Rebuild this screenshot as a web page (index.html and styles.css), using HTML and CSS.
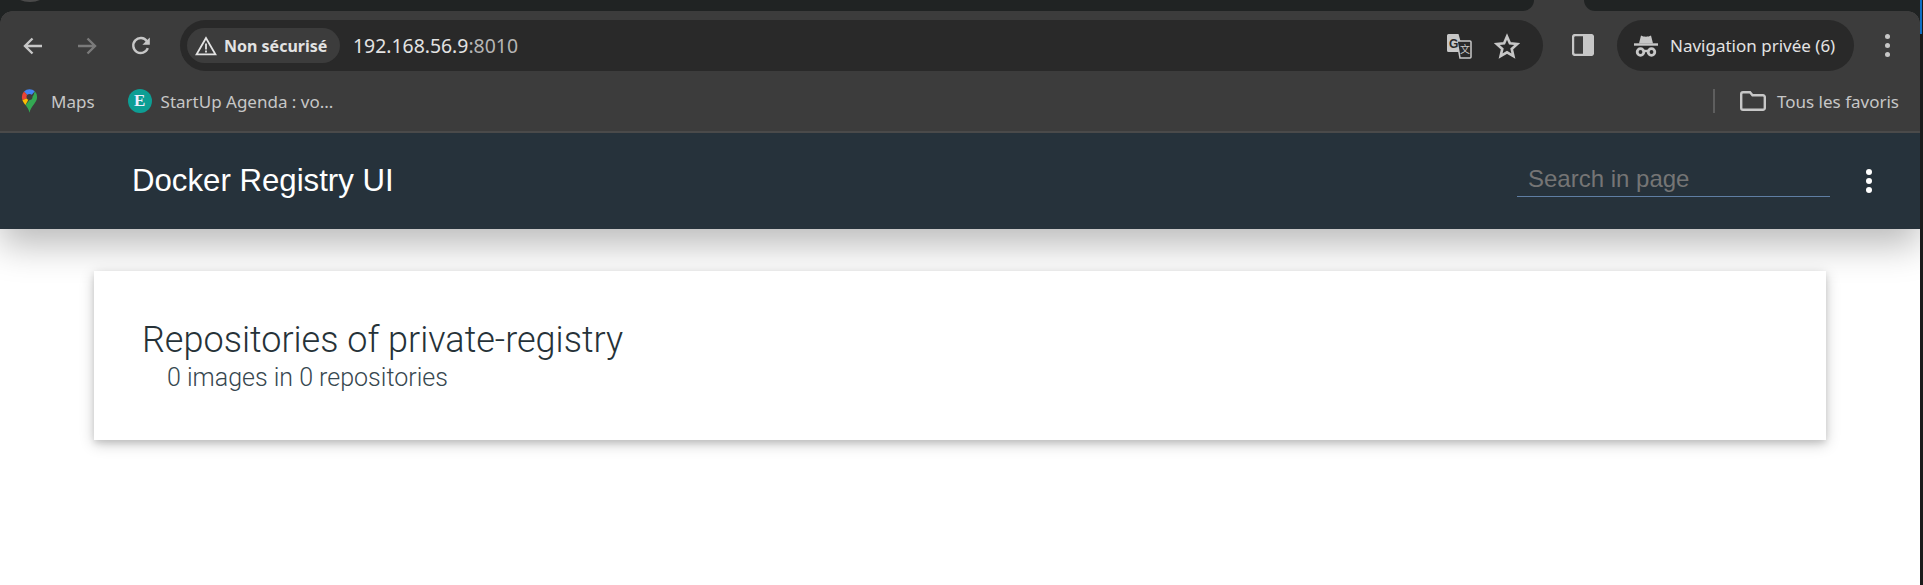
FILE: index.html
```html
<!DOCTYPE html>
<html lang="fr">
<head>
<meta charset="utf-8">
<title>Docker Registry UI</title>
<link rel="stylesheet" href="styles.css">
</head>
<body>
<div class="window">
  <div class="chrome">
    <div class="tabstrip">
      <div class="tab tab-main"><span class="tab-fav"></span></div>
      <div class="tab tab-next"></div>
    </div>
    <div class="panel">
      <div class="toolbar">
        <button class="nav" aria-label="Retour">
          <svg width="20" height="20" viewBox="0 0 20 20"><path d="M19 10H2.500M9.500 2.500L2 10l7.500 7.500" class="ic"/></svg>
        </button>
        <button class="nav nav-off" aria-label="Suivant">
          <svg width="20" height="20" viewBox="0 0 20 20"><path d="M1 10h16.500M10.500 2.500L18 10l-7.500 7.500" class="ic"/></svg>
        </button>
        <button class="nav" aria-label="Actualiser">
          <svg width="22" height="22" viewBox="0 0 22 22"><path d="M17.800 13.200a7.500 7.500 0 1 1-.9-7l1.200 1.600" class="ic"/><path d="M19.800 2.400v7.400h-7.400z" class="fill"/></svg>
        </button>
        <div class="omnibox">
          <div class="chip">
            <svg width="22" height="20" viewBox="0 0 22 20"><path d="M11 2L1.600 18.400h18.800z" class="ic thin"/><path d="M11 7.500v6M11 14.600v1.800" class="ic thin"/></svg>
            <span class="chip-text">Non sécurisé</span>
          </div>
          <div class="url">192.168.56.9<span class="url-port">:8010</span></div>
          <svg class="translate" width="26" height="26" viewBox="0 0 26 26">
            <path d="M1 2.500a1.500 1.500 0 0 1 1.500-1.500h10l5 18H2.500A1.500 1.500 0 0 1 1 17.500z" class="fill"/>
            <path d="M11 8h13a1 1 0 0 1 1 1v15a1 1 0 0 1-1 1H14l-3-17z" class="page"/>
            <text x="3" y="15" class="tr-g">G</text>
            <text x="14" y="20" class="tr-k">文</text>
          </svg>
          <svg class="star" width="26" height="26" viewBox="0 0 26 26"><path d="M13 3.500l2.900 6.800 7.400.7-5.600 4.900 1.700 7.200L13 19.300l-6.400 3.800 1.700-7.200L2.700 11l7.400-.7z" class="ic star-line"/></svg>
        </div>
        <svg class="side" width="22" height="22" viewBox="0 0 22 22"><rect x="1" y="1" width="20" height="20" rx="2.500" class="ic"/><rect x="11" y="1" width="10" height="20" class="fill"/></svg>
        <div class="profile">
          <svg width="24" height="23" viewBox="0 0 24 23"><path d="M7 1.500c1.500.8 3 1.200 5 1.200s3.500-.4 5-1.200L19 9.500H5z" class="fill"/><path d="M0 10.500h24" class="ic"/><circle cx="6.500" cy="18" r="3.300" class="ic heavy"/><circle cx="17.500" cy="18" r="3.300" class="ic heavy"/><path d="M9.500 17h5" class="ic"/></svg>
          <span class="profile-text">Navigation privée (6)</span>
        </div>
        <div class="more"><i></i><i></i><i></i></div>
      </div>
      <div class="bookmarks">
        <div class="bm bm-maps">
          <svg width="17" height="24" viewBox="0 0 17 24">
            <path d="M3 2.500A8.300 8.300 0 0 1 8.500.2c2 0 3.900.8 5.300 2L8.500 8.500z" fill="#4285f4"/>
            <path d="M3 2.500A8.300 8.300 0 0 0 .9 8c0 1 .2 2 .5 2.900L8.500 8.500z" fill="#ea4335"/>
            <path d="M1.400 10.900c.7 1.900 2 3.600 3.100 5.100l4-7.500z" fill="#fbbc04"/>
            <path d="M13.800 2.200A8 8 0 0 1 16.100 8c0 3-1.700 5.300-3.300 7.400-1.800 2.300-3.600 4.700-4.300 8.300-.6-3-2.300-5.300-4-7.700l8.100-10z" fill="#34a853"/>
            <circle cx="8.500" cy="8" r="3" fill="#3c3c3c"/>
          </svg>
          <span>Maps</span>
        </div>
        <div class="bm bm-start">
          <span class="e-badge">E</span>
          <span>StartUp Agenda : vo...</span>
        </div>
        <div class="bm-spacer"></div>
        <div class="bm-sep"></div>
        <div class="bm bm-all">
          <svg width="26" height="20" viewBox="0 0 26 20"><path d="M1.200 3a1.800 1.800 0 0 1 1.800-1.800h7l2.500 3h10.500a1.800 1.800 0 0 1 1.800 1.800v11a1.800 1.800 0 0 1-1.800 1.800H3A1.800 1.800 0 0 1 1.200 17z" class="ic"/></svg>
          <span>Tous les favoris</span>
        </div>
      </div>
    </div>
  </div>
  <header class="appbar">
    <h1 class="brand">Docker Registry UI</h1>
    <div class="search">Search in page</div>
    <div class="menu"><i></i><i></i><i></i></div>
  </header>
  <main class="content">
    <section class="card">
      <h2 class="card-title">Repositories of private-registry</h2>
      <p class="card-sub">0 images in 0 repositories</p>
    </section>
  </main>
</div>
<div class="edge"><div class="edge-blue"></div></div>
</body>
</html>
```
FILE: styles.css
```css
* { box-sizing: border-box; }
html, body { margin: 0; height: 100%; }
body { display: flex; width: 1923px; height: 585px; overflow: hidden; background: #fff; font-family: "Noto Sans", sans-serif; }

.window { width: 1920px; flex: none; display: flex; flex-direction: column; }
.edge { width: 3px; flex: none; background: #1b1b1b; }
.edge-blue { height: 34px; width: 2px; background: #0f6fc4; }

.chrome { position: relative; z-index: 2; background: #3c3c3c; }
.tabstrip { height: 11px; display: flex; justify-content: space-between; background: #3c3c3c; position: relative; }
.tab { background: #202323; height: 11px; position: relative; overflow: hidden; }
.tab-main { width: 1534px; border-bottom-right-radius: 14px; }
.tab-next { width: 336px; border-bottom-left-radius: 14px; }
.tab-fav { position: absolute; left: 15px; top: -14px; width: 30px; height: 16px; border-radius: 50%; background: #4a4a4a; }

.panel { background: #3c3c3c; }
.chrome::before { content: ""; position: absolute; left: 0; top: 11px; width: 12px; height: 12px; background: radial-gradient(circle at 100% 100%, transparent 11.500px, #202323 12px); }
.chrome::after { content: ""; position: absolute; right: 0; top: 11px; width: 12px; height: 12px; background: radial-gradient(circle at 0 100%, transparent 11.500px, #202323 12px); }

.toolbar { height: 60px; display: flex; align-items: flex-start; padding: 9px 0 0 6px; }
.nav { width: 54px; height: 51px; flex: none; padding: 0; border: 0; background: none; display: flex; align-items: center; justify-content: center; }
.nav-off { opacity: .45; }
.ic { fill: none; stroke: #c7c7c7; stroke-width: 2.400; }
.ic.thin { stroke-width: 1.800; stroke: #e3e3e3; }
.ic.heavy { stroke-width: 2.800; }
.star-line { stroke-width: 2.600; }
.fill { fill: #c7c7c7; }
.page { fill: #292929; stroke: #c7c7c7; stroke-width: 1.500; }
.tr-g { font: bold 12px "Liberation Sans", sans-serif; fill: #292929; }
.tr-k { font: 10px "Noto Sans CJK SC", sans-serif; fill: #c7c7c7; }

.omnibox { width: 1363px; height: 51px; margin-left: 12px; flex: none; display: flex; align-items: center; background: #292929; border-radius: 26px; padding-left: 7px; }
.chip { width: 153px; height: 35px; flex: none; display: flex; align-items: center; gap: 7px; padding-left: 8px; background: #3c3c3c; border-radius: 18px; }
.chip-text { font-size: 16px; font-weight: 700; color: #e3e3e3; white-space: nowrap; }
.url { margin-left: 13px; font-size: 19.400px; color: #e3e3e3; white-space: nowrap; flex: 1; }
.url-port { color: #b5b5b5; }
.translate { flex: none; margin-right: 22px; }
.star { flex: none; margin-right: 23px; }
.side { flex: none; margin: 14px 23px 0 29px; }

.profile { width: 237px; height: 51px; flex: none; display: flex; align-items: center; gap: 12px; padding-left: 17px; background: #292929; border-radius: 26px; }
.profile-text { font-size: 17px; color: #e3e3e3; white-space: nowrap; }
.more { width: 67px; height: 51px; flex: none; display: flex; flex-direction: column; align-items: center; justify-content: center; gap: 4px; }
.more i { width: 5px; height: 5px; border-radius: 50%; background: #c7c7c7; }

.bookmarks { height: 62px; display: flex; align-items: flex-start; padding: 18px 21px 0 21px; border-bottom: 2px solid #4a4a4a; color: #c7c7c7; font-size: 17px; }
.bm { display: flex; align-items: center; height: 24px; white-space: nowrap; }
.bm-maps { gap: 13px; }
.bm-start { margin-left: 33px; gap: 9px; }
.e-badge { width: 24px; height: 24px; border-radius: 50%; background: #0d9e94; color: #eef; display: flex; align-items: center; justify-content: center; font: bold 17px "Liberation Serif", serif; }
.bm-spacer { flex: 1; }
.bm-sep { width: 2px; height: 24px; background: #5e5e5e; margin-right: 25px; }
.bm-all { gap: 11px; }

.appbar { height: 96px; flex: none; display: flex; align-items: flex-start; background: #26323b; padding: 0 12px 0 132px; box-shadow: 0 16px 36px rgba(0,0,0,.27); }
.brand { margin: 30px 0 0; font: 400 31.200px/36px "Liberation Sans", sans-serif; color: #fff; }
.search { width: 313px; height: 32px; margin: 32px 0 0 auto; padding: 0 0 0 11px; border-bottom: 1px solid #5f7ea3; font: 24px/28px "Liberation Sans", sans-serif; color: #757575; }
.menu { width: 78px; margin-top: 36px; display: flex; flex-direction: column; align-items: center; gap: 3px; }
.menu i { width: 6px; height: 6px; border-radius: 50%; background: #fff; }

.content { padding: 42px 94px 0; }
.card { height: 169px; background: #fff; padding: 46px 48px 0; box-shadow: 0 3px 6px rgba(0,0,0,.12), 0 4px 14px rgba(0,0,0,.2); color: #263238; }
.card-title { margin: 0; font: 300 36px/46px Roboto, sans-serif; }
.card-sub { margin: 0 0 0 25px; font: 300 25px/30px Roboto, sans-serif; color: #37474f; }
```
